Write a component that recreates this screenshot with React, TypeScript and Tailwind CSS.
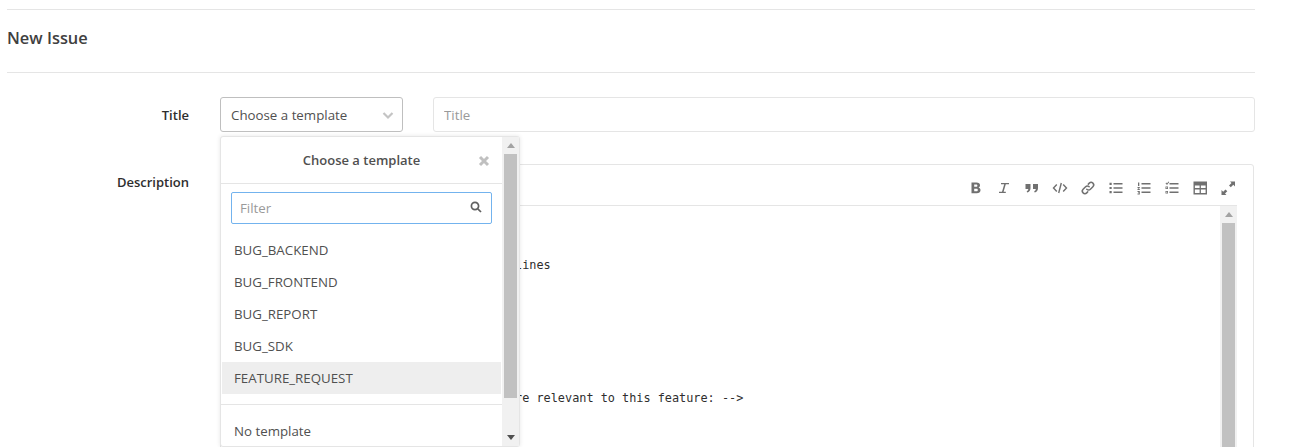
import React from "react";

const font = "[font-family:'Open_Sans',sans-serif]";

function ArrowUp() {
  return <div className="w-0 h-0 border-x-[4px] border-x-transparent border-b-[5px] border-b-[#a3a3a3]" />;
}
function ArrowDown() {
  return <div className="w-0 h-0 border-x-[4px] border-x-transparent border-t-[5px] border-t-[#505050]" />;
}

function Scrollbar({ thumbTop, thumbHeight }: { thumbTop: string; thumbHeight: string }) {
  return (
    <div className="w-[17px] shrink-0 bg-[#f1f1f1] flex flex-col items-center h-full">
      <div className={`${thumbTop} flex items-center justify-center w-full shrink-0`}>
        <ArrowUp />
      </div>
      <div className={`${thumbHeight} w-[13px] bg-[#c1c1c1] shrink-0`} />
      <div className="flex-1" />
      <div className="h-[17px] flex items-center justify-center w-full shrink-0">
        <ArrowDown />
      </div>
    </div>
  );
}

const ic = "text-[#707070] shrink-0";

function Toolbar() {
  return (
    <div className="flex items-center h-[41px] pt-[5px] border-b border-[#e5e5e5] justify-end pr-[1px] gap-[12px]">
      <svg width="16" height="16" viewBox="0 0 16 16" className={ic} fill="currentColor"><path fillRule="evenodd" d="M3.500 2.500h5c2.200 0 3.500 1 3.500 2.800 0 1.100-.6 1.900-1.500 2.300 1.300.4 2 1.300 2 2.600 0 2-1.500 3-3.700 3H3.500zm2.700 2.100v2.200h2c.8 0 1.200-.4 1.200-1.100s-.4-1.100-1.200-1.100zm0 4.100v2.500h2.300c.9 0 1.300-.5 1.300-1.300s-.4-1.200-1.300-1.200z" /></svg>
      <svg width="16" height="16" viewBox="0 0 16 16" className={ic} fill="currentColor"><path d="M5 3h8v1.300h-3.200L7.600 11.700h2.200V13H3v-1.300h3L8.200 4.300H5z" /></svg>
      <svg width="16" height="16" viewBox="0 0 16 16" className={ic} fill="currentColor"><path d="M1.500 4h5v4.200c0 2.300-1.300 3.800-3.300 4.300l-.5-1.300c1-.4 1.500-1 1.600-2.200H1.500zM9 4h5v4.200c0 2.300-1.300 3.800-3.300 4.300l-.5-1.300c1-.4 1.500-1 1.600-2.200H9z" /></svg>
      <svg width="16" height="16" viewBox="0 0 16 16" className={ic} fill="none" stroke="currentColor" strokeWidth="1.400"><path d="M4.800 4.500 1.500 8l3.300 3.500M11.200 4.500 14.500 8l-3.300 3.500M9.300 3 6.700 13" /></svg>
      <svg width="16" height="16" viewBox="0 0 16 16" className={ic} fill="none" stroke="currentColor" strokeWidth="1.500" strokeLinecap="round"><path d="M6.800 9.200a2.500 2.500 0 0 0 3.600 0l2.500-2.500a2.500 2.500 0 0 0-3.600-3.600L8.300 4.100" /><path d="M9.200 6.800a2.500 2.500 0 0 0-3.600 0L3.100 9.300a2.500 2.500 0 0 0 3.600 3.600l1-1" /></svg>
      <svg width="16" height="16" viewBox="0 0 16 16" className={ic} fill="currentColor"><path d="M1.500 2.800h2.200V5H1.500zM1.500 6.900h2.200v2.200H1.500zM1.500 11h2.200v2.200H1.500zM5.500 3.100h9v1.400h-9zM5.500 7.300h9v1.400h-9zM5.500 11.500h9v1.400h-9z" /></svg>
      <svg width="16" height="16" viewBox="0 0 16 16" className={ic} fill="currentColor"><path d="M2 2.500h1.300v3.500H2zM1.500 7h2.300v1l-1.300 1h1.300v1H1.500V9l1.300-1H1.500zM1.500 11h2.300v3.500H1.500v-1h1.300v-.5H2v-.5h.8V12H1.500zM5.500 3.100h9v1.400h-9zM5.500 7.300h9v1.400h-9zM5.500 11.500h9v1.400h-9z" /></svg>
      <svg width="16" height="16" viewBox="0 0 16 16" className={ic} fill="currentColor"><path d="M1.500 3.200l.8-.6.7.8 1.500-1.900.8.6-2.300 2.900zM1.500 6.500H4v2.500H1.500zm.8.800v.9h.9v-.9zM1.500 11H4v2.500H1.500zm.8.800v.9h.9v-.9zM5.500 3.100h9v1.400h-9zM5.500 7.300h9v1.400h-9zM5.500 11.500h9v1.400h-9z" /></svg>
      <svg width="16" height="16" viewBox="0 0 16 16" className={ic} fill="currentColor"><path fillRule="evenodd" d="M1.500 1.500h13.500v13H1.500zm1.400 4v2.600h4.700V5.500zm6 0v2.600h4.700V5.500zM2.900 9.400v3.700h4.700V9.400zm6 0v3.700h4.700V9.400z" /></svg>
      <svg width="16" height="16" viewBox="0 0 16 16" className={ic} fill="currentColor"><path d="M10 1.500h5v5l-1.700-1.700-2.500 2.500-1.800-1.800 2.500-2.500zM6.500 15h-5v-5l1.700 1.700 2.300-2.300 1.800 1.800-2.300 2.300z" /></svg>
    </div>
  );
}

const lines = [
  "## Feature request",
  "",
  "Follow the contribution and style guidelines",
  "",
  "",
  "",
  "",
  "",
  "",
  "<!-- Please link any open issues that are relevant to this feature: -->",
  "",
  "",
];

export default function App() {
  return (
    <div className={`${font} w-[1248px] h-[447px] overflow-hidden ml-[7px] pt-[9px] text-[#2e2e2e] bg-white text-[13.3px]`}>
      <div className="border-t border-[#e5e5e5] border-b h-[64px] flex items-center pb-[6px]">
        <h3 className="text-[16.4px] font-semibold text-[#404040]">New Issue</h3>
      </div>

      <div className="mt-[24px] flex">
        <label className="w-[182px] h-[35px] text-right font-semibold pt-[1px] leading-[35px] text-[13px]">Title</label>
        <div className="relative ml-[31px] w-[183px] shrink-0">
          <button className="w-full h-[35px] border border-[#bfbfbf] rounded-[3px] flex items-center justify-between pl-[10px] pr-[8px] text-[#505050]">
            <span className="pt-[2px]">Choose a template</span>
            <svg width="12" height="12" viewBox="0 0 12 12" fill="none" stroke="#c4c4c4" strokeWidth="2.200"><path d="M1.500 4 6 8.500 10.500 4" /></svg>
          </button>
          <div className="absolute z-10 left-0 top-[39px] w-[300px] h-[311px] bg-white border border-[#e5e5e5] rounded-[3px] shadow-[0_0_4px_rgba(0,0,0,0.1)] flex">
            <div className="flex-1 min-w-0 flex flex-col text-[#505050]">
              <div className="h-[48px] pt-[1px] border-b border-[#e5e5e5] flex items-center justify-center relative font-semibold text-[13px]">
                <span>Choose a template</span>
                <svg width="12" height="12" viewBox="0 0 12 12" fill="none" stroke="#c0c0c0" strokeWidth="3" className="absolute right-[12px] top-[18px]"><path d="M2 2l8 8M10 2l-8 8" /></svg>
              </div>
              <div className="mt-[8px] mx-[10px] h-[32px] pt-[3px] border border-[#73b3ee] rounded-[2px] flex items-center justify-between pl-[8px] pr-[9px] text-[#9a9a9a]">
                <span>Filter</span>
                <svg width="12" height="12" viewBox="0 0 12 12" fill="none" stroke="#606060" strokeWidth="1.700" className="-mt-[5px]"><circle cx="5" cy="5" r="3.600" /><path d="M7.800 7.800 11 11" /></svg>
              </div>
              <div className="mt-[10px] mx-px">
                {["BUG_BACKEND", "BUG_FRONTEND", "BUG_REPORT", "BUG_SDK", "FEATURE_REQUEST"].map((t, i) => (
                  <div key={t} className={`h-[32px] pl-[12px] pt-[2px] flex items-center ${i === 4 ? "bg-[#eeeeee]" : ""}`}>{t}</div>
                ))}
              </div>
              <div className="mt-[10px] border-b border-[#e5e5e5]" />
              <div className="mt-[10px] h-[32px] pl-[13px] pt-[4px] flex items-center">No template</div>
            </div>
            <Scrollbar thumbTop="h-[17px]" thumbHeight="h-[244px]" />
          </div>
        </div>
        <input placeholder="Title" className="ml-[30px] flex-1 min-w-0 h-[35px] border border-[#e5e5e5] rounded-[3px] px-[10px] outline-none placeholder:text-[#9a9a9a]" />
      </div>

      <div className="mt-[32px] flex pr-px">
        <label className="w-[182px] text-right font-semibold text-[13px] pt-[8px] leading-[20px]">Description</label>
        <div className="ml-[31px] flex-1 min-w-0 h-[300px] border border-[#e5e5e5] rounded-[3px] pr-[16px]">
          <Toolbar />
          <div className="flex h-[260px]">
            <pre className="flex-1 min-w-0 overflow-hidden pl-[16px] pt-[12px] text-[11.85px] leading-[19px] text-[#2e2e2e] [font-family:'DejaVu_Sans_Mono',monospace]">
              {lines.join("\n")}
            </pre>
            <Scrollbar thumbTop="h-[17px]" thumbHeight="h-[400px]" />
          </div>
        </div>
      </div>
    </div>
  );
}
